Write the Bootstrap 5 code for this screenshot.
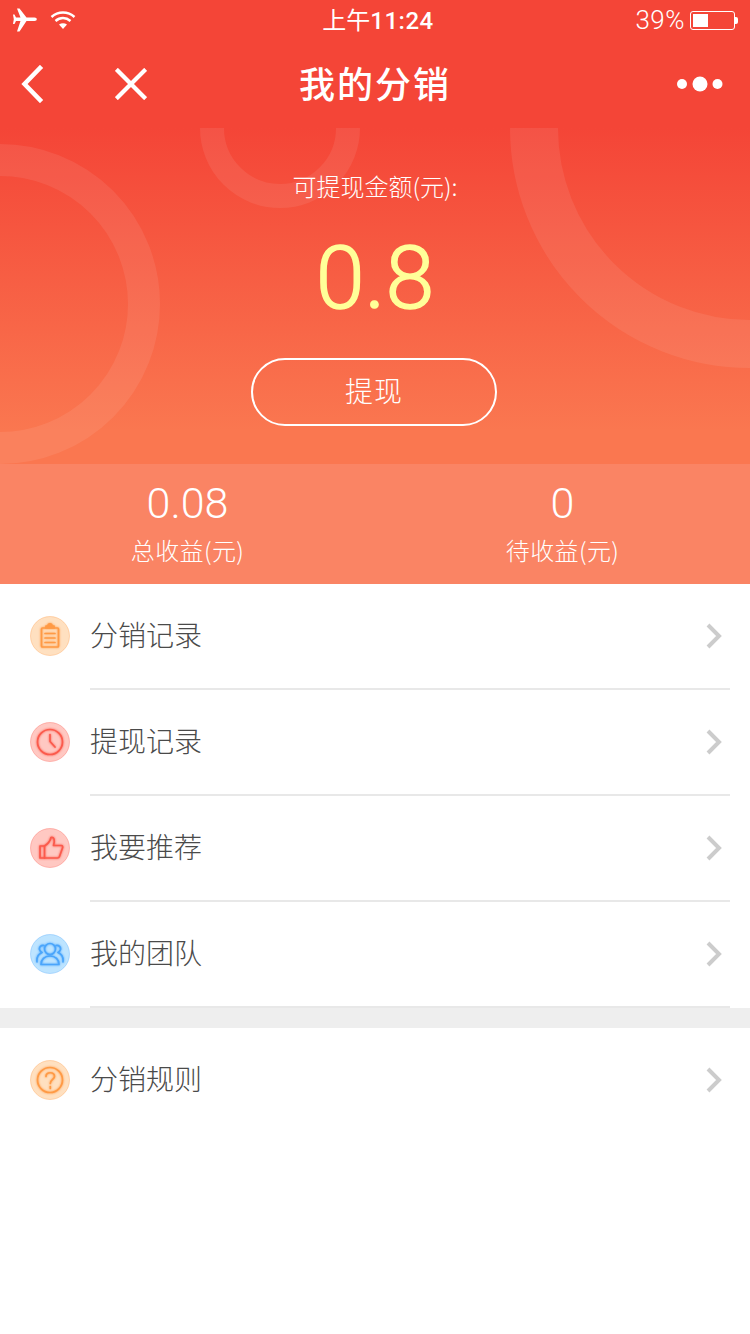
<!DOCTYPE html>
<html lang="zh-CN">
<head>
    <meta charset="UTF-8">
    <meta name="viewport" content="width=device-width, initial-scale=1.0">
    <title>我的分销</title>
    <link href="https://cdn.jsdelivr.net/npm/bootstrap@5.3.0/dist/css/bootstrap.min.css" rel="stylesheet">
    <style>
        body {
            font-family: "Liberation Sans", "Noto Sans CJK SC", sans-serif;
            background: #fff;
            width: 750px;
            height: 1334px;
            overflow: hidden;
        }
        .top-area {
            background: #f44537;
            color: #fff;
        }
        .status-bar {
            height: 40px;
            padding: 0 12px 0 13px;
            font-size: 25px;
            font-family: "Noto Sans CJK SC", sans-serif;
        }
        .status-side {
            width: 200px;
        }
        .status-left {
            gap: 13px;
        }
        .status-time {
            font-size: 24px;
            margin-left: 5px;
        }
        .status-time b {
            font-family: Roboto, sans-serif;
            font-weight: 500;
            font-size: 24px;
            letter-spacing: 0.5px;
        }
        .status-pct {
            font-family: Roboto, sans-serif;
            font-weight: 300;
            font-size: 26px;
            letter-spacing: 0.5px;
            margin-right: 5px;
        }
        .battery {
            width: 45px;
            height: 19px;
            border: 1px solid #fff;
            border-radius: 3px;
            padding: 2px;
        }
        .battery-fill {
            height: 100%;
            background: #fff;
        }
        .battery-tip {
            width: 3px;
            height: 7px;
            background: #fff;
            border-radius: 0 2px 2px 0;
        }
        .nav-row {
            height: 88px;
            padding: 0 27px 0 20px;
        }
        .nav-title {
            font-family: "Noto Sans CJK SC", sans-serif;
            font-size: 36px;
            font-weight: 500;
            letter-spacing: 2px;
            margin-bottom: 4px;
        }
        .nav-side {
            width: 200px;
        }
        .nav-side-left {
            width: 207px;
        }
        .nav-close {
            margin-left: 71px;
        }
        .hero {
            height: 336px;
            background: linear-gradient(180deg, #f44537 0%, #fa7750 90%);
            color: #fff;
            overflow: hidden;
            font-family: "Noto Sans CJK SC", sans-serif;
        }
        .ring {
            position: absolute;
            border-radius: 50%;
            border-style: solid;
            border-color: rgba(255, 255, 255, 0.08);
        }
        .ring-left {
            left: -160px;
            top: 16px;
            width: 320px;
            height: 320px;
            border-width: 32px;
        }
        .ring-mid {
            left: 200px;
            top: -80px;
            width: 160px;
            height: 160px;
            border-width: 24px;
        }
        .ring-right {
            left: 510px;
            top: -240px;
            width: 480px;
            height: 480px;
            border-width: 48px;
        }
        .hero-body {
            position: relative;
        }
        .hero-label {
            font-size: 24px;
            font-weight: 300;
            line-height: 36px;
            margin-top: 40px;
        }
        .hero-amount {
            font-family: Roboto, sans-serif;
            font-weight: 300;
            -webkit-text-stroke: 1.4px #ffff99;
            font-size: 88px;
            line-height: 100px;
            color: #ffff99;
            margin-top: 24px;
        }
        .btn-withdraw {
            width: 246px;
            height: 68px;
            margin-top: 30px;
            margin-right: 2px;
            border: 2px solid #fff;
            border-radius: 34px;
            color: #fff;
            font-size: 28px;
            font-weight: 300;
            letter-spacing: 1px;
            padding: 0 0 4px;
        }
        .stats {
            height: 120px;
            background: #fa8464;
            color: #fff;
        }
        .stat-col {
            width: 50%;
            padding-top: 13px;
        }
        .stat-num {
            font-family: Roboto, sans-serif;
            font-weight: 300;
            font-size: 43px;
            line-height: 52px;
        }
        .stat-label {
            font-family: "Noto Sans CJK SC", sans-serif;
            font-weight: 300;
            font-size: 24px;
            line-height: 36px;
            letter-spacing: 0.4px;
            margin-top: 3px;
        }
        .menu-row {
            height: 106px;
            padding-left: 30px;
            font-family: "Noto Sans CJK SC", sans-serif;
            font-size: 28px;
            font-weight: 300;
            color: #4a4a4a;
        }
        .menu-icon {
            width: 40px;
            height: 40px;
            flex: none;
            margin-bottom: 2px;
        }
        .menu-icon-line {
            filter: drop-shadow(0 0 1px currentColor);
        }
        .menu-main {
            height: 100%;
            margin-left: 20px;
            margin-right: 20px;
            flex: 1;
            border-bottom: 2px solid #e8e8e8;
            padding-right: 8px;
        }
        .menu-main span {
            margin-bottom: 4px;
        }
        .menu-row-last .menu-main {
            border-bottom-color: transparent;
        }
        .menu-gap {
            height: 20px;
            background: #eeeeee;
        }
    </style>
</head>
<body>
    <div class="top-area">
        <!-- 状态栏 -->
        <div class="status-bar d-flex align-items-center justify-content-between">
            <div class="status-side status-left d-flex align-items-center">
                <svg width="24" height="24" viewBox="0 0 24 24" fill="#fff"><path d="M4 0.5 L6.5 0.5 L13.5 9.5 L21.5 9.5 C24.5 9.5 24.5 13 21.5 13 L13.5 13 L6.5 23.5 L4 23.5 L7.5 13 L3 13 L1.5 16 L0 16 L0.8 11.2 L0 6.5 L1.5 6.5 L3 9.5 L7.5 9.5 Z"/></svg>
                <svg width="26" height="20" viewBox="0 0 26 20" fill="none" stroke="#fff" stroke-width="2.4"><path d="M1.5 7 C8 1 18 1 24.5 7"/><path d="M5.5 11 C10 7 16 7 20.5 11"/><path d="M13 19 L9 14.5 C11.5 12.8 14.5 12.8 17 14.5 Z" fill="#fff" stroke="none"/></svg>
            </div>
            <div class="status-time">上午<b>11:24</b></div>
            <div class="status-side d-flex align-items-center justify-content-end">
                <span class="status-pct">39%</span>
                <div class="battery d-flex"><div class="battery-fill" style="width: 39%"></div></div>
                <div class="battery-tip"></div>
            </div>
        </div>
        <!-- 标题栏 -->
        <div class="nav-row d-flex align-items-center justify-content-between">
            <div class="nav-side nav-side-left d-flex align-items-center">
                <svg width="24" height="38" viewBox="0 0 24 38" fill="none" stroke="#fff" stroke-width="4.5" stroke-linecap="square"><path d="M20 3 L4.5 19 L20 35"/></svg>
                <svg class="nav-close" width="32" height="32" viewBox="0 0 34 34" fill="none" stroke="#fff" stroke-width="4.5" stroke-linecap="square"><path d="M3 3 L31 31 M31 3 L3 31"/></svg>
            </div>
            <div class="nav-title">我的分销</div>
            <div class="nav-side d-flex align-items-center justify-content-end">
                <svg width="46" height="16" viewBox="0 0 46 16" fill="#fff"><circle cx="5" cy="8" r="5"/><circle cx="23" cy="8" r="7.5"/><circle cx="40.5" cy="8" r="5"/></svg>
            </div>
        </div>
    </div>

    <!-- 金额 -->
    <div class="hero position-relative text-center">
        <div class="ring ring-left"></div>
        <div class="ring ring-mid"></div>
        <div class="ring ring-right"></div>
        <div class="hero-body d-flex flex-column align-items-center">
            <div class="hero-label">可提现金额(元):</div>
            <div class="hero-amount">0.8</div>
            <button type="button" class="btn btn-withdraw">提现</button>
        </div>
    </div>

    <div class="stats d-flex text-center">
        <div class="stat-col">
            <div class="stat-num">0.08</div>
            <div class="stat-label">总收益(元)</div>
        </div>
        <div class="stat-col">
            <div class="stat-num">0</div>
            <div class="stat-label">待收益(元)</div>
        </div>
    </div>

    <!-- 菜单 -->
    <div id="menu-top"></div>
    <div class="menu-gap"></div>
    <div id="menu-bottom"></div>

    <script>
        const icons = {
            clipboard: { fill: '#ffe0c0', line: '#ff9a45', body: '<rect x="11.5" y="12" width="17" height="19" rx="1"/><path d="M16 12 V10 H18 C18 7 22 7 22 10 H24 V12 Z" fill="#ff9a45"/><path d="M15 17.5 H25 M15 22 H25 M15 26.5 H25"/>' },
            clock: { fill: '#ffc8c2', line: '#fb5a4c', body: '<circle cx="20" cy="20" r="12.5"/><path d="M20 12.5 V19.5 L25 25"/>' },
            thumb: { fill: '#ffc8c2', line: '#fb5a4c', body: '<path d="M10 18 H14.5 V30 H10 Z"/><path d="M14.5 18 C17 16.5 20 14 21 9.5 C24.5 8.5 25 13 23.5 17.5 H31.5 C32.5 17.5 33 19 32.5 20 L29.5 28.5 C29.2 29.5 28.5 30 27.5 30 H14.5"/>' },
            team: { fill: '#bde4ff', line: '#4aa5fb', body: '<circle cx="20" cy="15" r="5.5"/><path d="M11 30.5 C11 25.5 14.5 22 20 22 C25.5 22 29 25.5 29 30.5 Z"/><path d="M14 11.5 C11 11 9 13 9.5 15.5 C10 17 11 18 12 18.5 C8.5 20 6.5 23.5 7 28"/><path d="M26 11.5 C29 11 31 13 30.5 15.5 C30 17 29 18 28 18.5 C31.5 20 33.5 23.5 33 28"/>' },
            help: { fill: '#ffe0c0', line: '#ff9a45', body: '<circle cx="20" cy="20" r="12.5"/><path d="M16 16.5 C16 11.5 24.5 11.5 24.5 16.5 C24.5 19.5 20.3 19.5 20.3 23.5"/><path d="M20.3 26.5 V28.5"/>' }
        };

        function menuRow(label, icon, last) {
            const i = icons[icon];
            return `
                <div class="menu-row d-flex align-items-center ${last ? 'menu-row-last' : ''}">
                    <svg class="menu-icon" viewBox="0 0 40 40">
                        <circle cx="20" cy="20" r="19.5" fill="${i.fill}" stroke="${i.line}" stroke-opacity="0.35"/>
                        <g class="menu-icon-line" color="${i.line}" fill="none" stroke="${i.line}" stroke-width="1.7" stroke-linejoin="round" stroke-linecap="round">${i.body}</g>
                    </svg>
                    <div class="menu-main d-flex align-items-center justify-content-between">
                        <span>${label}</span>
                        <svg width="16" height="26" viewBox="0 0 16 26" fill="none" stroke="#cccccc" stroke-width="4"><path d="M2 2 L13 13 L2 24"/></svg>
                    </div>
                </div>`;
        }

        document.getElementById('menu-top').innerHTML =
            menuRow('分销记录', 'clipboard') +
            menuRow('提现记录', 'clock') +
            menuRow('我要推荐', 'thumb') +
            menuRow('我的团队', 'team');
        document.getElementById('menu-bottom').innerHTML = menuRow('分销规则', 'help', true);
    </script>
    <script src="https://cdn.jsdelivr.net/npm/bootstrap@5.3.0/dist/js/bootstrap.bundle.min.js"></script>
</body>
</html>
